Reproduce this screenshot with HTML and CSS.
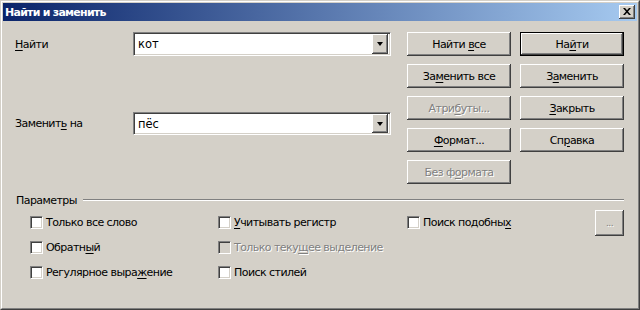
FILE: index.html
```html
<!DOCTYPE html>
<html lang="ru">
<head>
<meta charset="utf-8">
<title>Найти и заменить</title>
<link rel="stylesheet" href="styles.css">
</head>
<body>
<div class="window">
  <div class="inner">
    <div class="titlebar">
      <span class="title">Найти и заменить</span>
      <span class="closebtn"><svg width="8" height="7" viewBox="0 0 8 7"><path d="M0 0h2l2 2.3 2-2.3h2l-3 3.5 3 3.5h-2l-2-2.3-2 2.3h-2l3-3.5z" fill="#000"/></svg></span>
    </div>
    <div class="content">
      <div class="top">
        <div class="fields">
          <div class="row">
            <span class="label"><u>Н</u>айти</span>
            <div class="combo"><span class="combo-text">кот</span><span class="drop"><span class="arrow"></span></span></div>
          </div>
          <div class="row row-replace">
            <span class="label">Заменит<u>ь</u> на</span>
            <div class="combo"><span class="combo-text">пёс</span><span class="drop"><span class="arrow"></span></span></div>
          </div>
        </div>
        <div class="buttons">
          <span class="btn"><span>Найти <u>в</u>се</span></span>
          <span class="btn btn-default"><span class="btn-in"><span>На<u>й</u>ти</span></span></span>
          <span class="btn"><span>За<u>м</u>енить все</span></span>
          <span class="btn"><span>З<u>а</u>менить</span></span>
          <span class="btn disabled"><span>Атри<u>б</u>уты...</span></span>
          <span class="btn"><span><u>З</u>акрыть</span></span>
          <span class="btn"><span><u>Ф</u>ормат...</span></span>
          <span class="btn"><span>Сп<u>р</u>авка</span></span>
          <span class="btn disabled"><span>Без ф<u>о</u>рмата</span></span>
        </div>
      </div>
      <div class="options">
        <div class="legend"><span>Параметры</span></div>
        <div class="optgrid">
          <label class="chk"><span class="box"></span><span>Только все слово</span></label>
          <label class="chk"><span class="box"></span><span><u>У</u>читывать регистр</span></label>
          <label class="chk"><span class="box"></span><span>Поиск подобны<u>х</u></span></label>
          <span class="btn small disabled"><span>...</span></span>
          <label class="chk"><span class="box"></span><span>Обратн<u>ы</u>й</span></label>
          <label class="chk disabled"><span class="box"></span><span>Только теку<u>щ</u>ее выделение</span></label>
          <span class="empty"></span>
          <span class="empty"></span>
          <label class="chk"><span class="box"></span><span>Регулярное выра<u>ж</u>ение</span></label>
          <label class="chk"><span class="box"></span><span>Поиск стилей</span></label>
        </div>
      </div>
    </div>
  </div>
</div>
</body>
</html>
```
FILE: styles.css
```css
html, body {
  margin: 0;
  padding: 0;
  background: #d4d0c8;
}
body {
  font-family: "DejaVu Sans", sans-serif;
  font-size: 11px;
  letter-spacing: -0.55px;
  color: #000;
}
u {
  text-decoration: underline;
  text-underline-offset: 2px;
}
.window {
  width: 640px;
  height: 310px;
  box-sizing: border-box;
  border: 1px solid;
  border-color: #d4d0c8 #404040 #404040 #d4d0c8;
  background: #d4d0c8;
}
.inner {
  height: 100%;
  box-sizing: border-box;
  border: 1px solid;
  border-color: #fff #808080 #808080 #fff;
  padding: 1px;
  display: flex;
  flex-direction: column;
}
.titlebar {
  height: 18px;
  flex: none;
  background: linear-gradient(to right, #0a246a, #a6caf0);
  display: flex;
  align-items: center;
  justify-content: space-between;
  padding: 0 2px 0 2px;
}
.title {
  color: #fff;
  font-family: "DejaVu Sans", sans-serif;
  font-weight: bold;
  font-size: 11px;
  letter-spacing: -0.75px;
}
.closebtn {
  width: 16px;
  height: 14px;
  box-sizing: border-box;
  background: #d4d0c8;
  box-shadow: inset -1px -1px 0 #404040, inset 1px 1px 0 #fff, inset -2px -2px 0 #808080;
  display: flex;
  align-items: center;
  justify-content: center;
  padding-bottom: 1px;
}
.content {
  flex: 1;
  padding: 11px 0 0 12px;
}
.top {
  display: flex;
  align-items: flex-start;
}
.fields {
  width: 376px;
  display: flex;
  flex-direction: column;
}
.row {
  display: flex;
  align-items: center;
  height: 24px;
}
.row-replace {
  margin-top: 56px;
  height: 23px;
}
.label {
  width: 118px;
  flex: none;
}
.combo {
  width: 258px;
  height: 100%;
  box-sizing: border-box;
  background: #fff;
  border: 1px solid;
  border-color: #808080 #fff #fff #808080;
  box-shadow: inset 1px 1px 0 #404040, inset -1px -1px 0 #d4d0c8;
  display: flex;
  align-items: stretch;
  padding: 1px 2px 1px 1px;
}
.combo-text {
  flex: 1;
  padding-left: 3px;
  display: flex;
  align-items: center;
  font-size: 11.5px;
  letter-spacing: 0;
}
.drop {
  width: 16px;
  background: #d4d0c8;
  box-shadow: inset -1px -1px 0 #404040, inset 1px 1px 0 #fff, inset -2px -2px 0 #808080;
  display: flex;
  align-items: center;
  justify-content: center;
}
.arrow {
  width: 0;
  height: 0;
  border-left: 3.5px solid transparent;
  border-right: 3.5px solid transparent;
  border-top: 4px solid #000;
}
.buttons {
  margin-left: 16px;
  display: grid;
  grid-template-columns: 104px 104px;
  grid-auto-rows: 24px;
  column-gap: 9px;
  row-gap: 8px;
}
.btn {
  box-sizing: border-box;
  background: #d4d0c8;
  box-shadow: inset -1px -1px 0 #404040, inset 1px 1px 0 #fff, inset -2px -2px 0 #808080;
  display: flex;
  align-items: center;
  justify-content: center;
  white-space: nowrap;
}
.btn-default {
  border: 1px solid #000;
  box-shadow: none;
  padding: 0;
}
.btn-in {
  flex: 1;
  align-self: stretch;
  display: flex;
  align-items: center;
  justify-content: center;
  box-shadow: inset -1px -1px 0 #404040, inset 1px 1px 0 #fff, inset -2px -2px 0 #808080;
}
.disabled {
  color: #808080;
  text-shadow: 1px 1px 0 #fff;
}
.options {
  padding-right: 13px;
  margin-top: 9px;
}
.legend {
  display: flex;
  align-items: center;
  height: 14px;
  padding-left: 1px;
}
.legend::after {
  content: "";
  flex: 1;
  margin-left: 6px;
  border-top: 1px solid #808080;
  border-bottom: 1px solid #fff;
}
.optgrid {
  margin-top: 3px;
  padding-left: 15px;
  display: grid;
  grid-template-columns: 188px 189px 188px 29px;
  grid-template-rows: 25px 25px 25px;
}
.chk {
  display: flex;
  align-items: center;
  white-space: nowrap;
}
.box {
  width: 13px;
  height: 13px;
  box-sizing: border-box;
  flex: none;
  margin-right: 3px;
  background: #fff;
  border: 1px solid;
  border-color: #808080 #fff #fff #808080;
  box-shadow: inset 1px 1px 0 #404040, inset -1px -1px 0 #d4d0c8;
}
.chk.disabled .box {
  background: #d4d0c8;
}
.small {
  height: 26px;
  align-self: start;
  font-size: 9px;
}
```
